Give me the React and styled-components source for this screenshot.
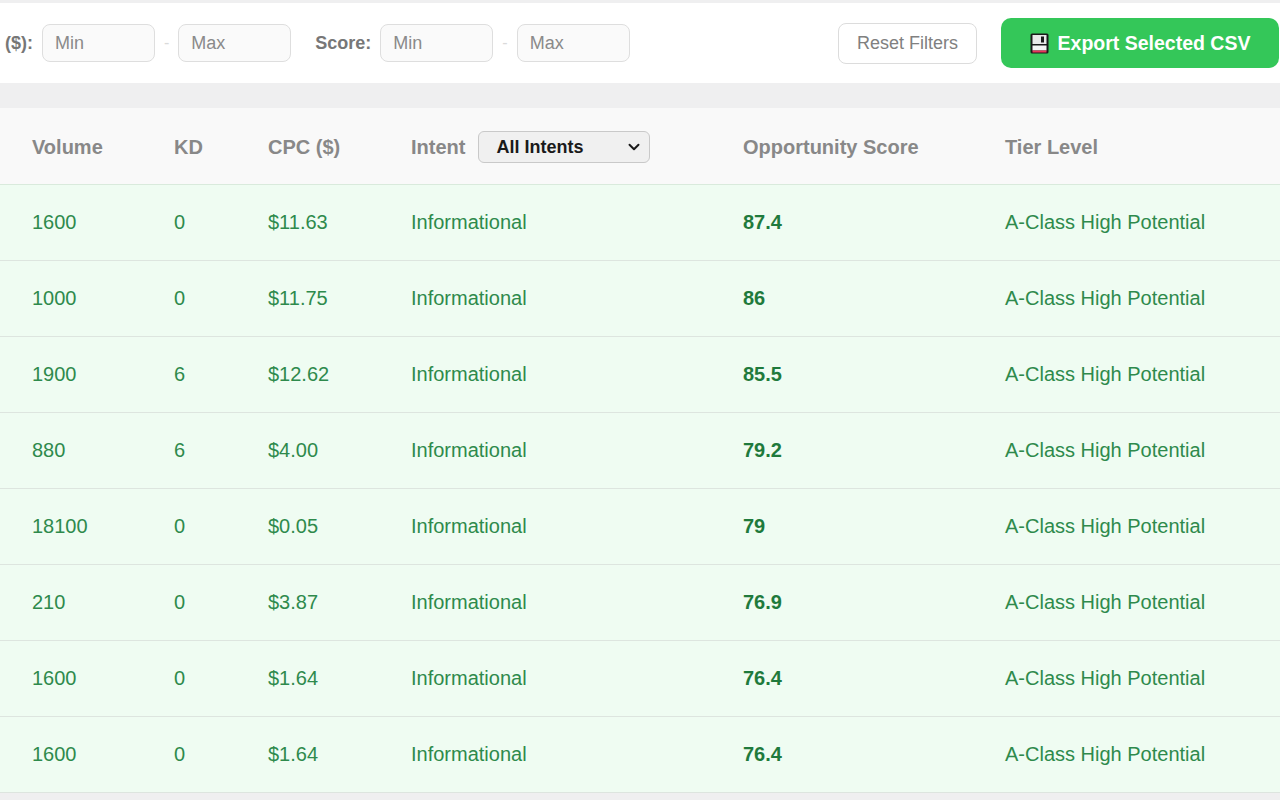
import React from "react";
import styled, { createGlobalStyle } from "styled-components";
import { ChevronDown } from "lucide-react";

const GlobalStyle = createGlobalStyle`
  html, body {
    margin: 0;
    padding: 0;
    background: #efeff0;
    font-family: "Liberation Sans", Arial, sans-serif;
    overflow: hidden;
  }
`;

const rows = [
  { volume: 1600, kd: 0, cpc: "$11.63", score: "87.4" },
  { volume: 1000, kd: 0, cpc: "$11.75", score: "86" },
  { volume: 1900, kd: 6, cpc: "$12.62", score: "85.5" },
  { volume: 880, kd: 6, cpc: "$4.00", score: "79.2" },
  { volume: 18100, kd: 0, cpc: "$0.05", score: "79" },
  { volume: 210, kd: 0, cpc: "$3.87", score: "76.9" },
  { volume: 1600, kd: 0, cpc: "$1.64", score: "76.4" },
  { volume: 1600, kd: 0, cpc: "$1.64", score: "76.4" },
];

const FloppyIcon = () => (
  <svg width="19" height="21" viewBox="0 0 19 21">
    <rect x="0.5" y="0.5" width="18" height="20" rx="1.5" fill="#1a1a1a" />
    <rect x="2.5" y="2" width="14" height="9" fill="#e8e8e8" />
    <rect x="11" y="3.5" width="3" height="6" fill="#1a1a1a" />
    <rect x="2.5" y="12.5" width="14" height="5" fill="#f4f4f4" />
    <rect x="2.5" y="17.5" width="14" height="2" fill="#e8365a" />
  </svg>
);

const App = () => {
  return (
    <>
      <GlobalStyle />
      <Page>
        <Toolbar>
          <Filters>
            <FilterGroup>
              <FilterLabel>($):</FilterLabel>
              <RangeInput placeholder="Min" />
              <Dash>-</Dash>
              <RangeInput placeholder="Max" />
            </FilterGroup>
            <FilterGroup>
              <FilterLabel>Score:</FilterLabel>
              <RangeInput placeholder="Min" />
              <Dash>-</Dash>
              <RangeInput placeholder="Max" />
            </FilterGroup>
          </Filters>
          <Actions>
            <ResetButton>Reset Filters</ResetButton>
            <ExportButton>
              <FloppyIcon />
              Export Selected CSV
            </ExportButton>
          </Actions>
        </Toolbar>

        <TableWrap>
          <HeaderRow>
            <HeadCell>Volume</HeadCell>
            <HeadCell>KD</HeadCell>
            <HeadCell>CPC ($)</HeadCell>
            <HeadCell>
              Intent
              <SelectBox>
                All Intents
                <ChevronDown size={18} strokeWidth={2.6} />
              </SelectBox>
            </HeadCell>
            <HeadCell>Opportunity Score</HeadCell>
            <HeadCell>Tier Level</HeadCell>
          </HeaderRow>
          {rows.map((r, i) => (
            <Row key={i}>
              <Cell>{r.volume}</Cell>
              <Cell>{r.kd}</Cell>
              <Cell>{r.cpc}</Cell>
              <Cell>Informational</Cell>
              <Cell bold>{r.score}</Cell>
              <Cell>A-Class High Potential</Cell>
            </Row>
          ))}
        </TableWrap>
      </Page>
    </>
  );
};

export default App;

const Page = styled.div`
  padding-top: 3px;
  width: 1280px;
  height: 800px;
  overflow: hidden;
`;

const Toolbar = styled.div`
  height: 80px;
  background: #ffffff;
  display: flex;
  align-items: center;
  justify-content: space-between;
  padding: 0 1px 0 5px;
  box-sizing: border-box;
`;

const Filters = styled.div`
  display: flex;
  align-items: center;
  gap: 24px;
`;

const FilterGroup = styled.div`
  display: flex;
  align-items: center;
  gap: 8px;
`;

const FilterLabel = styled.span`
  font-size: 18px;
  font-weight: bold;
  color: #777;
  margin-right: 1px;
`;

const RangeInput = styled.input`
  width: 113px;
  height: 38px;
  box-sizing: border-box;
  border: 1px solid #dedede;
  border-radius: 8px;
  background: #fafafa;
  padding: 0 12px;
  font-family: "Liberation Sans", Arial, sans-serif;
  font-size: 18px;
  color: #333;
  outline: none;

  &::placeholder {
    color: #8a8a8a;
  }
`;

const Dash = styled.span`
  color: #dadada;
  font-size: 16px;
  margin: 0 1px;
`;

const Actions = styled.div`
  display: flex;
  align-items: center;
  gap: 24px;
`;

const ResetButton = styled.button`
  width: 139px;
  height: 41px;
  background: #ffffff;
  border: 1px solid #dcdcdc;
  border-radius: 8px;
  font-family: "Liberation Sans", Arial, sans-serif;
  font-size: 18px;
  color: #808080;
  cursor: pointer;
`;

const ExportButton = styled.button`
  width: 278px;
  height: 50px;
  display: flex;
  align-items: center;
  justify-content: center;
  gap: 9px;
  background: #34c759;
  border: none;
  border-radius: 10px;
  font-family: "Liberation Sans", Arial, sans-serif;
  font-size: 19.5px;
  font-weight: bold;
  color: #ffffff;
  cursor: pointer;
`;

const TableWrap = styled.div`
  margin-top: 25px;
  background: #effcf2;
`;

const columns = "142px 94px 143px 332px 262px 1fr";

const HeaderRow = styled.div`
  display: grid;
  grid-template-columns: ${columns};
  padding: 2px 0 0 16px;
  height: 77px;
  box-sizing: border-box;
  background: #f9f9f9;
  border-bottom: 1px solid #d9eadc;
  align-items: center;
`;

const HeadCell = styled.div`
  display: flex;
  align-items: center;
  gap: 13px;
  padding: 0 16px;
  font-size: 20px;
  font-weight: bold;
  color: #888888;
  white-space: nowrap;
`;

const SelectBox = styled.div`
  width: 172px;
  height: 32px;
  box-sizing: border-box;
  display: flex;
  align-items: center;
  justify-content: space-between;
  padding: 0 6px 0 17px;
  background: #f0f0f0;
  border: 1px solid #c9c9c9;
  border-radius: 6px;
  font-size: 18px;
  font-weight: bold;
  color: #1a1a1a;
`;

const Row = styled.div`
  display: grid;
  grid-template-columns: ${columns};
  padding-left: 16px;
  background: #effcf2;
  border-bottom: 1px solid #dde5df;
`;

const Cell = styled.div`
  padding: 26px 16px;
  line-height: 23px;
  font-size: 20px;
  font-weight: ${({ bold }) => (bold ? "bold" : "normal")};
  color: ${({ bold }) => (bold ? "#1f7a3c" : "#2e8a4c")};
  white-space: nowrap;
`;
